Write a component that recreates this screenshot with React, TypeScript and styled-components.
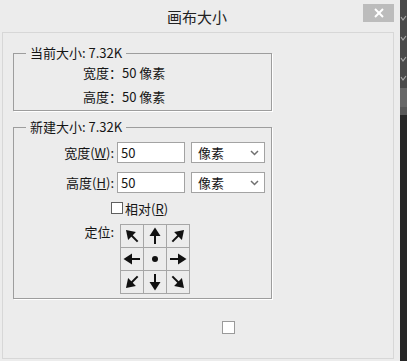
import React from "react";
import styled, { createGlobalStyle } from "styled-components";

const GlobalStyle = createGlobalStyle`
  html, body {
    margin: 0;
    padding: 0;
    background: #ececec;
  }
  body {
    font-family: "Noto Sans CJK SC", "Liberation Sans", sans-serif;
    font-size: 13px;
    color: #151515;
  }
`;

// direction of each anchor cell, in degrees (0 = pointing right), null = centre dot
const anchors: (number | null)[] = [225, 270, 315, 180, null, 0, 135, 90, 45];

const Arrow = ({ angle }: { angle: number | null }) => (
  <svg width="22" height="22" viewBox="0 0 22 22">
    {angle === null ? (
      <circle cx="11" cy="11" r="3" fill="#111" />
    ) : (
      <g transform={`rotate(${angle} 11 11)`}>
        <line x1="3" y1="11" x2="12" y2="11" stroke="#111" strokeWidth="2" />
        <polygon points="11,5.5 19.5,11 11,16.5" fill="#111" />
      </g>
    )}
  </svg>
);

const Chevron = () => (
  <svg width="9" height="6" viewBox="0 0 9 6">
    <polyline points="1,1 4.5,4.5 8,1" fill="none" stroke="#707070" strokeWidth="1.5" />
  </svg>
);

const App = () => {
  return (
    <>
      <GlobalStyle />
      <Screen>
        <Dialog>
          <TitleBar>
            <Title>画布大小</Title>
            <CloseButton>
              <svg width="10" height="10" viewBox="0 0 10 10">
                <line x1="1" y1="1" x2="9" y2="9" stroke="#fff" strokeWidth="2" />
                <line x1="9" y1="1" x2="1" y2="9" stroke="#fff" strokeWidth="2" />
              </svg>
            </CloseButton>
          </TitleBar>
          <Body>
            <Group $pb={1}>
              <Legend>当前大小: 7.32K</Legend>
              <InfoRow>宽度：50 像素</InfoRow>
              <InfoRow>高度：50 像素</InfoRow>
            </Group>

            <Group $pb={4} $mt={8}>
              <Legend>新建大小: 7.32K</Legend>
              <FieldRow $mt={7}>
                <Label>
                  宽度(<u>W</u>):
                </Label>
                <TextBox defaultValue="50" readOnly />
                <Dropdown>
                  <span>像素</span>
                  <Chevron />
                </Dropdown>
              </FieldRow>
              <FieldRow $mt={9}>
                <Label>
                  高度(<u>H</u>):
                </Label>
                <TextBox defaultValue="50" readOnly />
                <Dropdown>
                  <span>像素</span>
                  <Chevron />
                </Dropdown>
              </FieldRow>
              <CheckRow>
                <CheckBox />
                <span>
                  相对(<u>R</u>)
                </span>
              </CheckRow>
              <AnchorRow>
                <AnchorLabel>定位:</AnchorLabel>
                <AnchorGrid>
                  {anchors.map((a, i) => (
                    <AnchorCell key={i}>
                      <Arrow angle={a} />
                    </AnchorCell>
                  ))}
                </AnchorGrid>
              </AnchorRow>
            </Group>

            <LoneCheck />
          </Body>
        </Dialog>

        <SideStrip>
          <StripPart $h={88} $bg="#4a4a4a">
            <svg width="7" height="88" viewBox="0 0 7 88">
              {[17, 37, 58, 77].map((y) => (
                <polyline
                  key={y}
                  points={`1,${y} 3,${y + 3} 6,${y - 1}`}
                  fill="none"
                  stroke="#a8a8a8"
                  strokeWidth="1.2"
                />
              ))}
            </svg>
          </StripPart>
          <StripPart $h={19} $bg="#676767" />
          <StripPart $h={8} $bg="#585858" />
          <StripPart $bg="#272727" />
        </SideStrip>
      </Screen>
    </>
  );
};

export default App;

const Screen = styled.div`
  display: flex;
  width: 407px;
  height: 361px;
  overflow: hidden;
`;

const Dialog = styled.div`
  width: 400px;
  display: flex;
  flex-direction: column;
  background: #ececec;
`;

const TitleBar = styled.div`
  height: 32px;
  flex-shrink: 0;
  display: grid;
  grid-template-columns: 1fr auto 1fr;
  align-items: start;
  padding-right: 6px;
`;

const Title = styled.div`
  grid-column: 2;
  margin-top: 6px;
  font-size: 15px;
  line-height: 22px;
  color: #222;
`;

const CloseButton = styled.div`
  grid-column: 3;
  justify-self: end;
  width: 31px;
  height: 18px;
  margin-top: 4px;
  background: #bcbcbc;
  display: flex;
  align-items: center;
  justify-content: center;
`;

const Body = styled.div`
  flex: 1;
  margin: 0 6px 2px 2px;
  border: 1px solid #d7d7d7;
  padding: 12px 0 0 10px;
`;

const Group = styled.fieldset<{ $pb: number; $mt?: number }>`
  width: 259px;
  box-sizing: border-box;
  margin: ${(p) => p.$mt ?? 0}px 0 0 0;
  padding: 0 0 ${(p) => p.$pb}px 0;
  border: 1px solid #9d9d9d;
  box-shadow: 1px 1px 0 #fff;
  min-inline-size: auto;
`;

const Legend = styled.legend`
  margin-left: 12px;
  padding: 0 4px;
  font-size: 13px;
  line-height: 16px;
`;

const InfoRow = styled.div`
  height: 24px;
  line-height: 24px;
  padding-left: 69px;
`;

const FieldRow = styled.div<{ $mt: number }>`
  display: flex;
  align-items: center;
  margin-top: ${(p) => p.$mt}px;
  height: 21px;
`;

const Label = styled.span`
  width: 100px;
  margin-right: 3px;
  text-align: right;
  white-space: nowrap;
`;

const TextBox = styled.input`
  width: 68px;
  height: 21px;
  box-sizing: border-box;
  border: 1px solid #a3a3a3;
  background: #fff;
  padding: 0 3px;
  font: inherit;
  font-size: 13px;
  color: #151515;
  outline: none;
`;

const Dropdown = styled.div`
  width: 74px;
  height: 21px;
  box-sizing: border-box;
  margin-left: 6px;
  border: 1px solid #a3a3a3;
  background: #fff;
  display: flex;
  align-items: center;
  justify-content: space-between;
  padding: 0 5px 0 6px;
`;

const CheckRow = styled.div`
  display: flex;
  align-items: center;
  gap: 2px;
  height: 16px;
  margin-top: 7px;
  padding-left: 97px;
`;

const CheckBox = styled.div`
  width: 12px;
  height: 12px;
  box-sizing: border-box;
  border: 1px solid #5f5f5f;
  background: #fff;
`;

const AnchorRow = styled.div`
  display: flex;
  align-items: flex-start;
  margin-top: 8px;
`;

const AnchorLabel = styled.span`
  width: 100px;
  text-align: right;
  line-height: 16px;
`;

const AnchorGrid = styled.div`
  margin-left: 6px;
  display: grid;
  grid-template-columns: repeat(3, 22px);
  grid-auto-rows: 22px;
  gap: 1px;
  padding: 1px;
  background: #a6a6a6;
`;

const AnchorCell = styled.div`
  background: #ececec;
  display: flex;
`;

const LoneCheck = styled.div`
  width: 13px;
  height: 13px;
  box-sizing: border-box;
  margin: 22px 0 0 209px;
  border: 1px solid #9a9a9a;
  background: #fff;
`;

const SideStrip = styled.div`
  width: 7px;
  display: flex;
  flex-direction: column;
`;

const StripPart = styled.div<{ $h?: number; $bg: string }>`
  background: ${(p) => p.$bg};
  ${(p) => (p.$h ? `height: ${p.$h}px;` : "flex: 1;")}
  display: flex;
`;
